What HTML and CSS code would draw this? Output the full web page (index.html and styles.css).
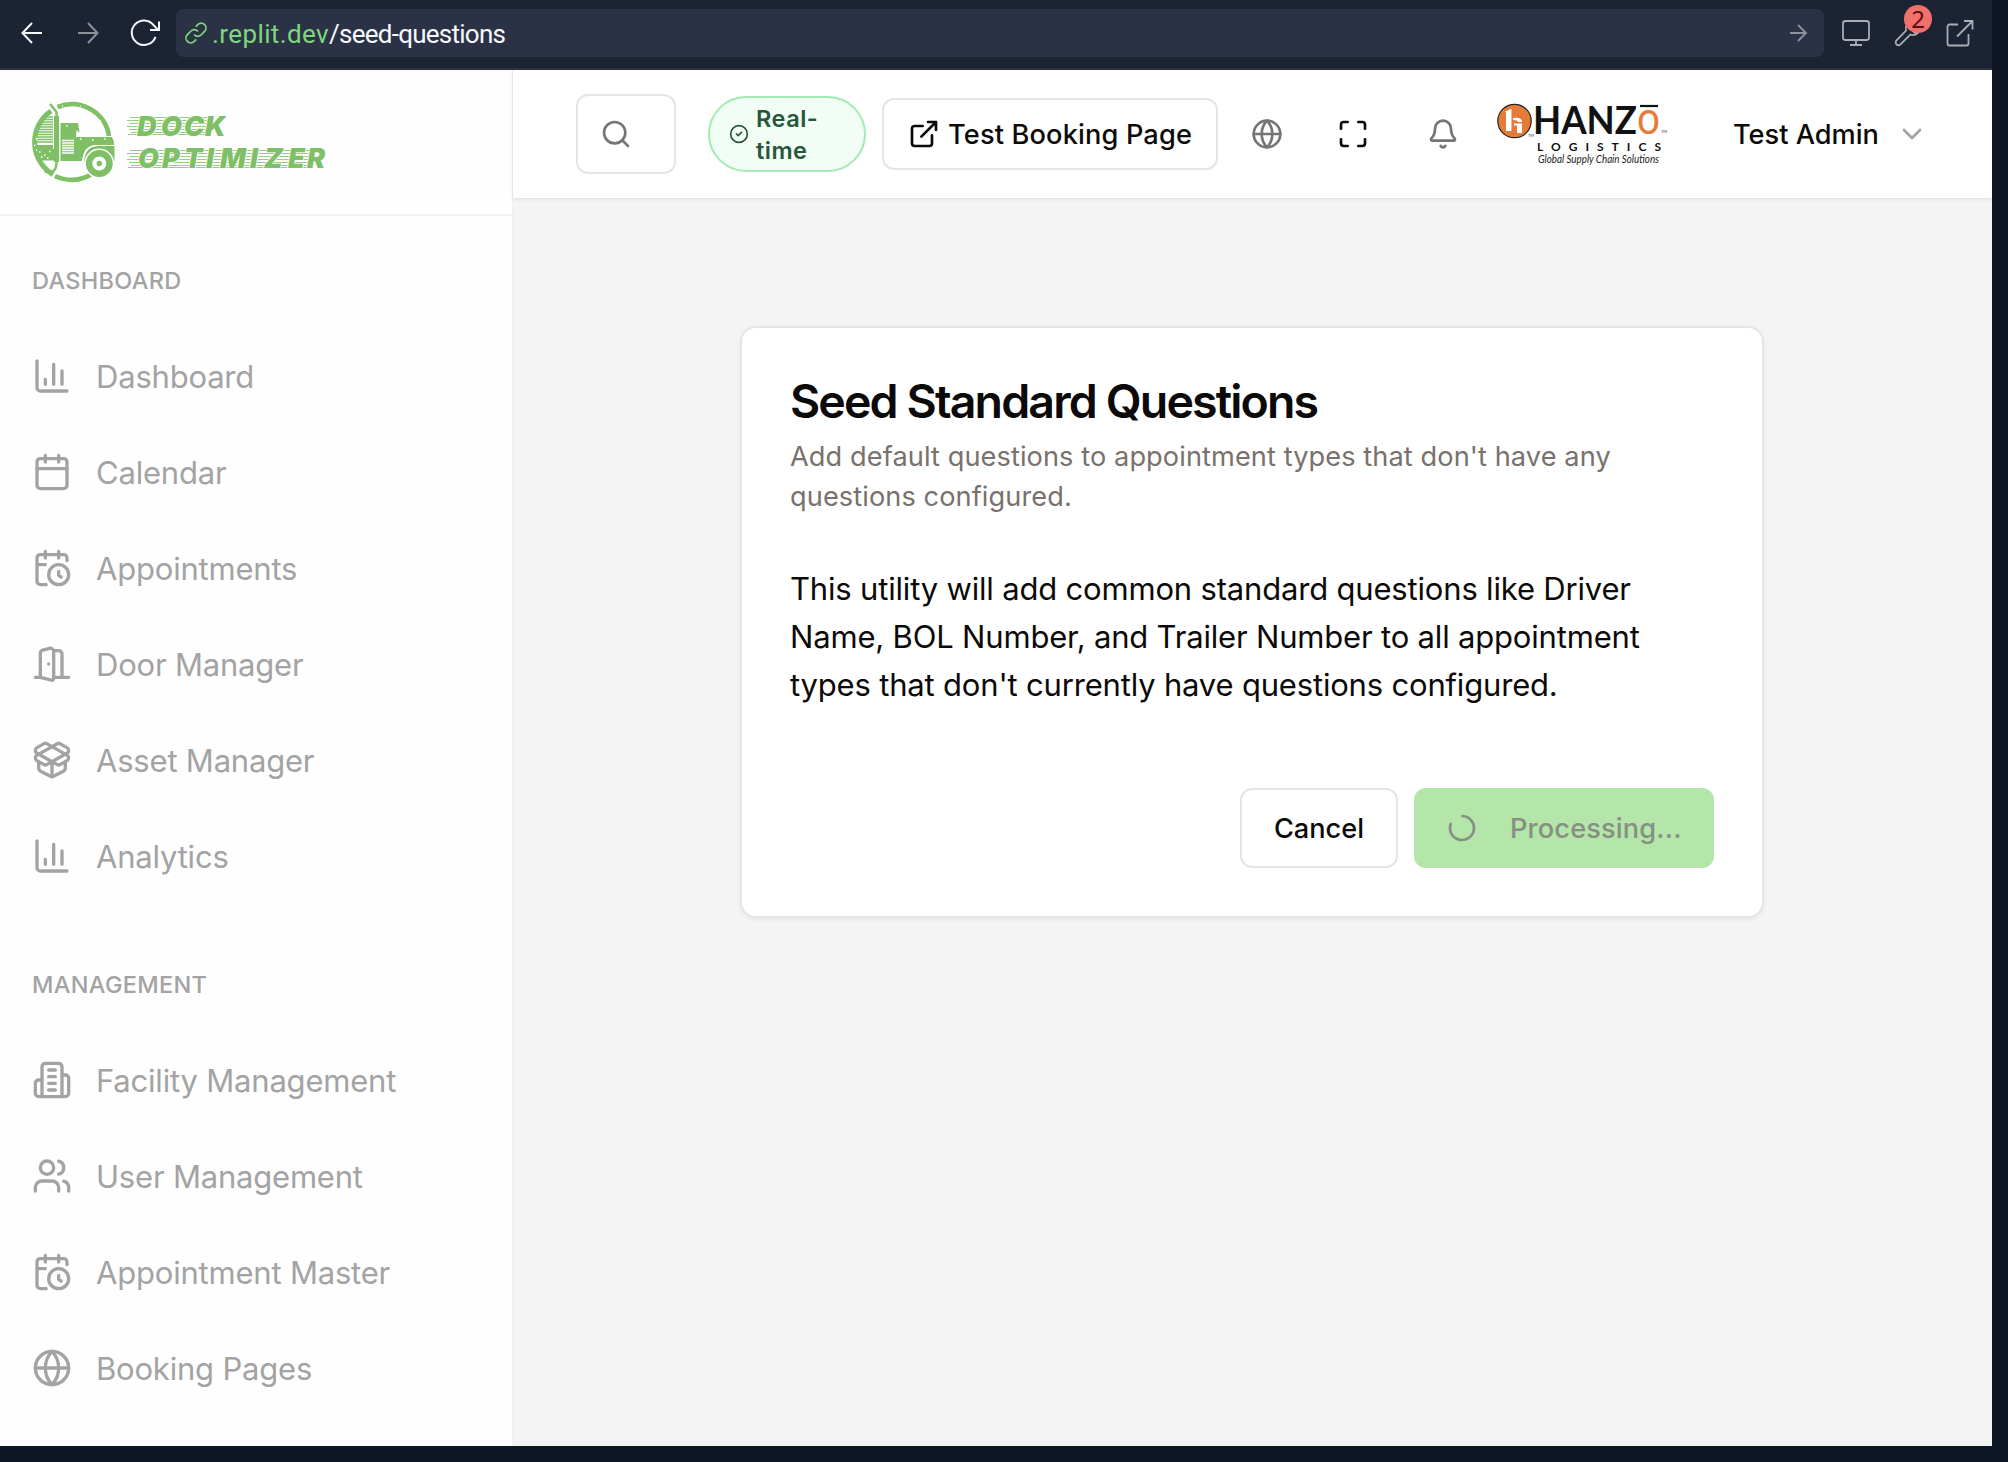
FILE: index.html
```html
<!DOCTYPE html>
<html lang="en">
<head>
<meta charset="utf-8">
<title>Seed Standard Questions</title>
<link rel="stylesheet" href="styles.css">
</head>
<body>
<svg class="defs" width="0" height="0">
  <symbol id="chart" viewBox="0 0 24 24"><path d="M3 3v16a2 2 0 0 0 2 2h16"/><path d="M18 17V9M13 17V5M8 17v-3"/></symbol>
  <symbol id="calendar" viewBox="0 0 24 24"><path d="M8 2v4M16 2v4"/><rect width="18" height="18" x="3" y="4" rx="2"/><path d="M3 10h18"/></symbol>
  <symbol id="calclock" viewBox="0 0 24 24"><path d="M21 7.500V6a2 2 0 0 0-2-2H5a2 2 0 0 0-2 2v14a2 2 0 0 0 2 2h3.500M16 2v4M8 2v4M3 10h5M17.500 17.500 16 16.300V14"/><circle cx="16" cy="16" r="6"/></symbol>
  <symbol id="door" viewBox="0 0 24 24"><path d="M13 4h3a2 2 0 0 1 2 2v14M2 20h3M13 20h9M10 12v.01M13 4.562v16.157a1 1 0 0 1-1.242.97L5 20V5.562a2 2 0 0 1 1.515-1.940l4-1A2 2 0 0 1 13 4.561Z"/></symbol>
  <symbol id="box" viewBox="0 0 24 24"><path d="M12 22v-9M15.170 2.210a1.670 1.670 0 0 1 1.630 0L21 4.570a1.930 1.930 0 0 1 0 3.360L8.820 14.790a1.655 1.655 0 0 1-1.640 0L3 12.430a1.930 1.930 0 0 1 0-3.360z"/><path d="M20 13v3.870a2.060 2.060 0 0 1-1.110 1.830l-6 3.080a1.930 1.930 0 0 1-1.780 0l-6-3.080A2.060 2.060 0 0 1 4 16.870V13"/><path d="M21 12.430a1.930 1.930 0 0 0 0-3.360L8.830 2.200a1.640 1.640 0 0 0-1.630 0L3 4.570a1.930 1.930 0 0 0 0 3.360l12.180 6.860a1.636 1.636 0 0 0 1.630 0z"/></symbol>
  <symbol id="building" viewBox="0 0 24 24"><path d="M6 22V4a2 2 0 0 1 2-2h8a2 2 0 0 1 2 2v18ZM6 12H4a2 2 0 0 0-2 2v6a2 2 0 0 0 2 2h2M18 9h2a2 2 0 0 1 2 2v9a2 2 0 0 1-2 2h-2M10 6h4M10 10h4M10 14h4M10 18h4"/></symbol>
  <symbol id="users" viewBox="0 0 24 24"><path d="M16 21v-2a4 4 0 0 0-4-4H6a4 4 0 0 0-4 4v2"/><circle cx="9" cy="7" r="4"/><path d="M22 21v-2a4 4 0 0 0-3-3.870M16 3.130a4 4 0 0 1 0 7.750"/></symbol>
  <symbol id="globe" viewBox="0 0 24 24"><circle cx="12" cy="12" r="10"/><path d="M12 2a14.500 14.500 0 0 0 0 20 14.500 14.500 0 0 0 0-20M2 12h20"/></symbol>
  <symbol id="external" viewBox="0 0 24 24"><path d="M15 3h6v6M10 14 21 3M18 13v6a2 2 0 0 1-2 2H5a2 2 0 0 1-2-2V8a2 2 0 0 1 2-2h6"/></symbol>
</svg>

<div class="browser">
  <div class="toolbar">
    <div class="nav-buttons">
      <svg class="chrome-icon" viewBox="0 0 32 32"><path d="M26 16H6.500M16 6 6.500 16l9.500 10"/></svg>
      <svg class="chrome-icon dim" viewBox="0 0 32 32"><path d="M6 16h19.500M16 6l9.500 10L16 26"/></svg>
      <svg class="chrome-icon" viewBox="0 0 32 32"><path d="M27.500 19.800A12.200 12.200 0 1 1 25.600 8.200l4 4.300M31 4.500v8.500h-9"/></svg>
    </div>
    <div class="address">
      <svg class="link-icon" viewBox="0 0 24 24"><path d="M10 13.500a4.700 4.700 0 0 0 7 .5l3.600-3.600a4.700 4.700 0 0 0-6.800-6.800l-2 2M14 10.500a4.700 4.700 0 0 0-7-.5l-3.600 3.600a4.700 4.700 0 0 0 6.800 6.800l2-2"/></svg>
      <div class="url"><span class="host">.replit.dev</span><span class="path">/seed-questions</span></div>
      <svg class="go-icon" viewBox="0 0 24 24"><path d="M4 12h15.500M12 4l8 8-8 8"/></svg>
    </div>
    <div class="tools">
      <svg class="chrome-icon grey" viewBox="0 0 32 32"><rect x="3" y="4" width="26" height="19" rx="2.500"/><path d="M16 23v5M10 28h12"/></svg>
      <div class="wrench">
        <svg class="chrome-icon grey" viewBox="0 0 32 32"><path d="M20.500 9.500l-1 3 3.500 3.500 5-4.500a7.500 7.500 0 0 1-9.800 6.200l-9.700 9.600a2.800 2.800 0 0 1-4-4l9.600-9.700A7.500 7.500 0 0 1 20 4z"/></svg>
        <span class="badge">2</span>
      </div>
      <svg class="chrome-icon grey" viewBox="0 0 32 32"><path d="M14 7.500H5.500A2 2 0 0 0 3.500 9.500v17a2 2 0 0 0 2 2h17a2 2 0 0 0 2-2V17M20 4h8.500v8.500M28.500 4 13 19.500"/></svg>
    </div>
  </div>

  <div class="app">
    <aside class="sidebar">
      <div class="brand">
        <svg class="brand-logo" viewBox="0 0 310 100">
          <g fill="none" stroke="#7fbf65">
            <path d="M37.500 17A37.700 37.700 0 0 1 89 46M35 86A37.700 37.700 0 0 0 71 84.500" stroke-width="4.600"/>
            <path d="M31 21A37.700 37.700 0 0 0 33 84.500" stroke-width="5"/>
            <path d="M30 14l6.500 8v50q0 9-5 9.500h-7" stroke-width="2.400"/>
          </g>
          <g fill="#7fbf65">
            <path d="M34 26h5v46h-5zM40.500 33H58l1.500 10-3-3-.5 7H92q2 3 2 8H76q-9 0-12 8l-2 8H40.500z"/>
            <path d="M13 59h21v11.500H18zM17 55h16v5H16z"/>
            <path d="M64 72q1-16 14-16h16.500v15H92q-3-12-13-12-10 0-13 13z"/>
          </g>
          <g stroke="#7fbf65" stroke-width="1.300">
            <path d="M26 27h7M24 29.500h9M22 32h11M21 34.500h12M20 37h13M18.500 39.500h14.500M17 42h16M17 44.500h16M17 47h16M17 49.500h16M17 52h16"/>
          </g>
          <g stroke="#fefefe" fill="none">
            <path d="M42 50.500h12M42 53h12M42 55.500h12M42 58h12M42 60.500h12M42 63h12" stroke-width="1.300"/>
            <path d="M62.500 71q2-15 16-15.500h16" stroke-width="1.200"/>
            <path d="M19 62h1.500M24 65h1.500M29 61.500h1.500M27 68h1.500M21 67h1.500M16 60h1M46 36h1.500M60 49h1.500M72 50h1.500M84 49h1.500M17 50l-1-2M15 56l-.5-1.500M42 16h1M60 16l1 .5M80 30l.6 1" stroke-width="1.300"/>
          </g>
          <circle cx="79.300" cy="73.500" r="11.500" fill="#fefefe" stroke="#fefefe" stroke-width="7"/>
          <circle cx="79.300" cy="73.500" r="10.200" fill="none" stroke="#7fbf65" stroke-width="6.400"/>
          <circle cx="79.300" cy="73.500" r="2.700" fill="#7fbf65"/>
          <g stroke="#7fbf65" stroke-width="1" opacity=".8">
            <path d="M110 27.500h82M107 30.500h84M110 33.500h80M107 36.500h83M109 39.500h80M111 42.500h77M108 44.500h80"/>
            <path d="M110 60.500h182M107 63.500h184M110 66.500h180M107 69.500h182M109 72.500h180M111 75.500h177M108 77.500h180"/>
          </g>
          <g class="brand-text">
            <text y="45.500" x="117 141 164 185">DOCK</text>
            <text y="78" x="118 142 164 186 200 230 244 268 287">OPTIMIZER</text>
          </g>
        </svg>
      </div>
      <nav class="menu">
        <section class="group">
          <h2 class="group-title">DASHBOARD</h2>
          <a class="item"><svg class="icon"><use href="#chart"/></svg><span>Dashboard</span></a>
          <a class="item"><svg class="icon"><use href="#calendar"/></svg><span>Calendar</span></a>
          <a class="item"><svg class="icon"><use href="#calclock"/></svg><span>Appointments</span></a>
          <a class="item"><svg class="icon"><use href="#door"/></svg><span>Door Manager</span></a>
          <a class="item"><svg class="icon"><use href="#box"/></svg><span>Asset Manager</span></a>
          <a class="item"><svg class="icon"><use href="#chart"/></svg><span>Analytics</span></a>
        </section>
        <section class="group">
          <h2 class="group-title">MANAGEMENT</h2>
          <a class="item"><svg class="icon"><use href="#building"/></svg><span>Facility Management</span></a>
          <a class="item"><svg class="icon"><use href="#users"/></svg><span>User Management</span></a>
          <a class="item"><svg class="icon"><use href="#calclock"/></svg><span>Appointment Master</span></a>
          <a class="item"><svg class="icon"><use href="#globe"/></svg><span>Booking Pages</span></a>
        </section>
      </nav>
    </aside>

    <div class="content">
      <header class="header">
        <div class="search"><svg class="hicon muted" viewBox="0 0 24 24"><circle cx="11" cy="11" r="8"/><path d="m21 21-4.300-4.300"/></svg></div>
        <div class="status">
          <svg class="status-icon" viewBox="0 0 24 24"><circle cx="12" cy="12" r="10"/><path d="m9 12 2 2 4-4"/></svg>
          <span class="status-text">Real-<br>time</span>
        </div>
        <button class="booking"><svg class="hicon"><use href="#external"/></svg><span>Test Booking Page</span></button>
        <div class="actions">
          <svg class="hicon muted"><use href="#globe"/></svg>
          <svg class="hicon" viewBox="0 0 24 24"><path d="M8 3H5a2 2 0 0 0-2 2v3M21 8V5a2 2 0 0 0-2-2h-3M3 16v3a2 2 0 0 0 2 2h3M16 21h3a2 2 0 0 0 2-2v-3"/></svg>
          <svg class="hicon muted bell" viewBox="0 0 24 24"><path d="M10.268 21a2 2 0 0 0 3.464 0"/><path d="M3.262 15.326A1 1 0 0 0 4 17h16a1 1 0 0 0 .740-1.673C19.410 13.956 18 12.499 18 8A6 6 0 0 0 6 8c0 4.499-1.411 5.956-2.738 7.326"/></svg>
        </div>
        <svg class="company" viewBox="0 0 174 72">
          <circle cx="18.500" cy="23" r="16.700" fill="#e57b38" stroke="#222" stroke-width="1.200"/>
          <path d="M9 13h2q3-2 4.500-2v22H10V14zM17 20q9-1 9 4h-4q0-2-5-2zM18 25.500h8V35h-5v-7.500h-3z" fill="#fff"/>
          <text class="hanzo" y="35.500"><tspan x="37" textLength="104" lengthAdjust="spacingAndGlyphs">HANZ</tspan><tspan class="hanzo-o" x="141" textLength="23" lengthAdjust="spacingAndGlyphs">o</tspan></text>
          <path d="M144 8h18" stroke="#111" stroke-width="2.200"/>
          <text class="tm" x="165" y="35">TM</text>
          <text class="tm" x="32" y="39">TM</text>
          <text class="logistics" x="41" y="52.500" textLength="124">LOGISTICS</text>
          <text class="tagline" x="42" y="65" textLength="121" lengthAdjust="spacingAndGlyphs">Global Supply Chain Solutions</text>
        </svg>
        <div class="user"><span>Test Admin</span><svg class="hicon light" viewBox="0 0 24 24"><path d="m6 9 6 6 6-6"/></svg></div>
      </header>
      <main class="main">
        <section class="card">
          <h1 class="title">Seed Standard Questions</h1>
          <p class="desc">Add default questions to appointment types that don't have any<br>questions configured.</p>
          <p class="body-text">This utility will add common standard questions like Driver<br>Name, BOL Number, and Trailer Number to all appointment<br>types that don't currently have questions configured.</p>
          <div class="card-actions">
            <button class="cancel">Cancel</button>
            <button class="processing" disabled><svg class="hicon" viewBox="0 0 24 24"><path d="M21 12a9 9 0 1 1-6.219-8.560" transform="rotate(-88 12 12)"/></svg><span>Processing...</span></button>
          </div>
        </section>
      </main>
    </div>
  </div>
</div>
</body>
</html>
```
FILE: styles.css
```css
* { box-sizing: border-box; }
body {
  margin: 0;
  background: #0e1525;
  font-family: Inter, "Liberation Sans", sans-serif;
  color: #0c0a09;
}
h1, h2, p { margin: 0; font-weight: 400; }
button { font: inherit; color: inherit; letter-spacing: inherit; }
svg { display: block; flex: none; }
.defs { position: absolute; }
.browser { width: 1992px; height: 1446px; display: flex; flex-direction: column; overflow: hidden; }

/* Browser chrome */
.toolbar { height: 70px; flex: none; display: flex; align-items: flex-start; background: #1c2333; border-bottom: 2px solid #2b3245; }
.nav-buttons { width: 176px; padding: 17px 0 0 16px; display: flex; gap: 24px; }
.chrome-icon { width: 32px; height: 32px; fill: none; stroke: #f5f9fc; stroke-width: 2; }
.dim { stroke: #8e9199; }
.grey { stroke: #a9adb4; stroke-width: 1.800; }
.address { width: 1648px; height: 48px; margin-top: 9px; padding: 0 14px 0 8px; display: flex; align-items: center; background: #2b3245; border-radius: 8px; }
.link-icon { width: 24px; height: 24px; fill: none; stroke: #7fd67f; stroke-width: 1.700; }
.url { flex: 1; padding: 2px 0 0 4px; font-family: Roboto, sans-serif; font-size: 26px; line-height: 46px; color: #f5f9fc; }
.host { color: #7fd67f; letter-spacing: .4px; }
.path { letter-spacing: -.75px; }
.go-icon { width: 24px; height: 24px; fill: none; stroke: #8e929c; stroke-width: 1.800; }
.tools { display: flex; gap: 20px; padding: 17px 0 0 16px; }
.wrench { position: relative; }
.badge { position: absolute; left: 12px; top: -12px; width: 28px; height: 28px; border-radius: 50%; background: #f0716b; color: #5c0f0f; font: 24px/28px "Noto Sans", sans-serif; text-align: center; }

.app { flex: 1; min-height: 0; display: flex; }

/* Sidebar */
.sidebar { width: 512px; flex: none; background: #fefefe; }
.brand { height: 146px; padding: 20px 20px 0; border-bottom: 2px solid #f3f3f3; }
.brand-logo { width: 310px; height: 100px; }
.brand-text { font: italic 900 27px Inter, sans-serif; fill: #7fbf65; stroke: #fefefe; stroke-width: 1.500px; paint-order: stroke; }
.menu { padding: 16px 32px 0; }
.group { padding-bottom: 32px; color: #a3a3a3; }
.group-title { height: 96px; padding-top: 1px; font-size: 23.500px; font-weight: 500; line-height: 96px; letter-spacing: .3px; }
.item { height: 96px; display: flex; align-items: center; gap: 24px; font-size: 31px; letter-spacing: -.2px; }
.icon { width: 40px; height: 40px; fill: none; stroke: currentColor; stroke-width: 2; stroke-linecap: round; stroke-linejoin: round; }

/* Main column */
.content { flex: 1; display: flex; flex-direction: column; background: #f4f4f4; border-left: 1px solid #f0f0f0; }
.header { height: 128px; flex: none; display: flex; align-items: center; padding-left: 63px; background: #fff; box-shadow: 0 1px 4px rgba(0, 0, 0, .1); font-size: 27.200px; font-weight: 500; }
.hicon { width: 32px; height: 32px; fill: none; stroke: currentColor; stroke-width: 2; stroke-linecap: round; stroke-linejoin: round; }
.muted { color: #757575; }
.light { color: #a3a3a3; }
.search { width: 100px; height: 80px; padding: 22px; border: 2px solid #e5e5e5; border-radius: 12px; }
.status { width: 158px; height: 76px; margin-left: 32px; padding-left: 19px; display: flex; align-items: center; gap: 7px; border: 2px solid #a2ebb2; border-radius: 38px; background: #f2fdf5; color: #27563a; }
.status-icon { width: 20px; height: 20px; fill: none; stroke: currentColor; stroke-width: 2; stroke-linecap: round; stroke-linejoin: round; }
.status-text { padding-top: 2px; font-size: 23.500px; font-weight: 600; line-height: 32px; letter-spacing: .5px; }
.booking { width: 336px; height: 72px; margin-left: 16px; padding: 0 0 0 24px; display: flex; align-items: center; gap: 8px; background: #fff; border: 2px solid #e5e5e5; border-radius: 12px; white-space: nowrap; letter-spacing: .150px; }
.booking span { padding-top: 1px; }
.actions { display: flex; margin-left: 33px; gap: 54px; }
.bell { margin-left: 4px; }
.company { width: 174px; height: 72px; margin-left: 37px; }
.hanzo { font: 700 39px Lato, sans-serif; fill: #111; }
.hanzo-o { font-size: 46px; font-weight: 400; fill: #e57b38; }
.tm { font: 4px Lato, sans-serif; fill: #333; }
.logistics { font: 700 12px Lato, sans-serif; fill: #111; }
.tagline { font: italic 10.500px Lato, sans-serif; fill: #222; }
.user { display: flex; align-items: center; gap: 17px; margin-left: 63px; white-space: nowrap; }
.user span { padding-top: 1px; }

.main { flex: 1; padding: 128px 0 0 227px; }
.card { width: 1024px; height: 592px; padding: 48px; background: #fff; border: 2px solid #e5e5e5; border-radius: 16px; box-shadow: 0 2px 4px rgba(0, 0, 0, .05); white-space: nowrap; }
.title { padding-top: 1px; font-size: 46.500px; font-weight: 600; line-height: 48px; letter-spacing: -1.870px; }
.desc { margin-top: 12px; font-size: 27.200px; line-height: 40px; color: #78716c; letter-spacing: .080px; }
.body-text { margin-top: 48px; font-size: 31px; line-height: 48px; letter-spacing: -.180px; }
.card-actions { display: flex; justify-content: flex-end; gap: 16px; margin-top: 79px; font-size: 27.200px; font-weight: 500; }
.cancel { width: 158px; height: 80px; padding: 1px 0 0; background: #fff; border: 2px solid #e5e5e5; border-radius: 12px; }
.processing { width: 300px; height: 80px; padding: 0 32px; display: flex; align-items: center; gap: 32px; background: #b3e6a8; border: 0; border-radius: 12px; color: #868f83; letter-spacing: .150px; }
```
